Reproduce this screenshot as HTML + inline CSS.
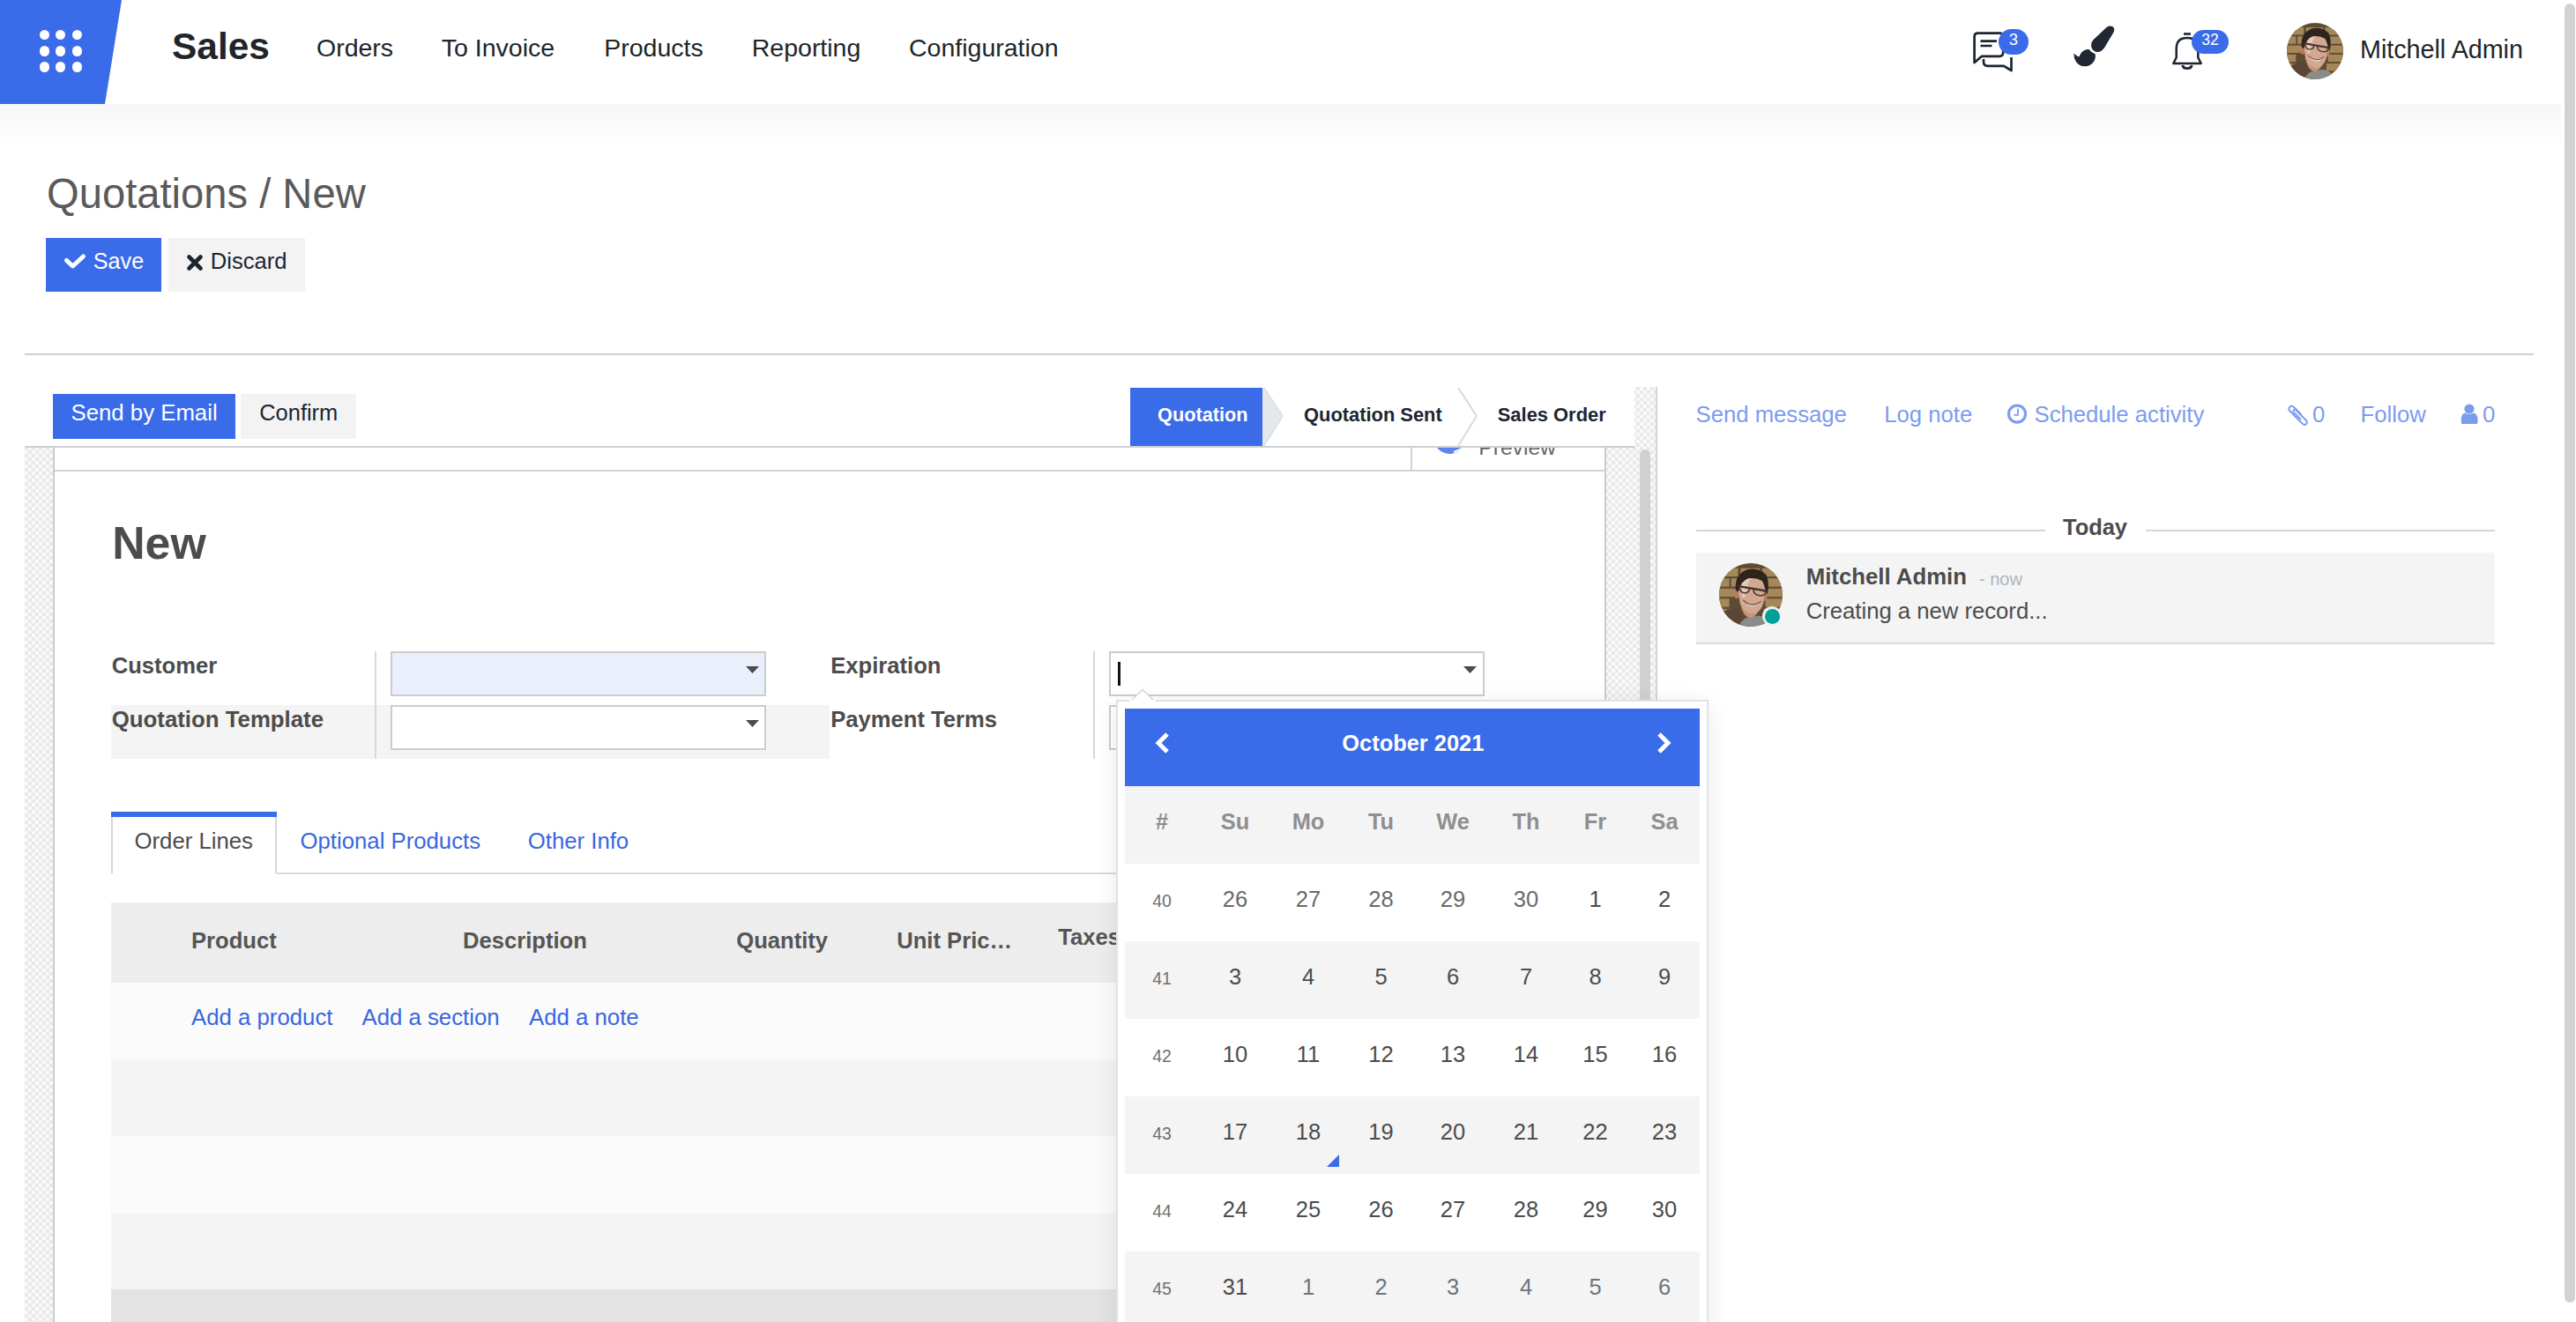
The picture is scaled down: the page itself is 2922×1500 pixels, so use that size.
<!DOCTYPE html>
<html><head><meta charset="utf-8"><title>Quotations / New</title>
<style>
html,body{margin:0;padding:0;}
body{width:2922px;height:1500px;overflow:hidden;position:relative;background:#fff;font-family:"Liberation Sans",sans-serif;}
.r{position:absolute;}
.t{position:absolute;white-space:nowrap;line-height:1;}
svg.r{display:block;overflow:visible;}
</style></head><body>
<div class="r" style="left:0px;top:0px;width:2922px;height:118px;background:#ffffff;"></div>
<div class="r" style="left:0px;top:118px;width:2905px;height:50px;background:linear-gradient(to bottom, rgba(40,60,80,0.045), rgba(40,60,80,0));"></div>
<svg class="r" style="left:0;top:0" width="140" height="118"><polygon points="0,0 138,0 119,118 0,118" fill="#3a6be9"/></svg>
<div class="r" style="left:45.16px;top:34.25px;width:11.2px;height:11.2px;border-radius:50%;background:#fff"></div>
<div class="r" style="left:63.30px;top:34.25px;width:11.2px;height:11.2px;border-radius:50%;background:#fff"></div>
<div class="r" style="left:81.60px;top:34.25px;width:11.2px;height:11.2px;border-radius:50%;background:#fff"></div>
<div class="r" style="left:45.16px;top:52.34px;width:11.2px;height:11.2px;border-radius:50%;background:#fff"></div>
<div class="r" style="left:63.30px;top:52.34px;width:11.2px;height:11.2px;border-radius:50%;background:#fff"></div>
<div class="r" style="left:81.60px;top:52.34px;width:11.2px;height:11.2px;border-radius:50%;background:#fff"></div>
<div class="r" style="left:45.16px;top:70.38px;width:11.2px;height:11.2px;border-radius:50%;background:#fff"></div>
<div class="r" style="left:63.30px;top:70.38px;width:11.2px;height:11.2px;border-radius:50%;background:#fff"></div>
<div class="r" style="left:81.60px;top:70.38px;width:11.2px;height:11.2px;border-radius:50%;background:#fff"></div>
<div class="t " style="left:195.00px;top:32.07px;font-size:42.45px;font-weight:700;color:#212529;">Sales</div>
<div class="t " style="left:359.00px;top:40.37px;font-size:28.5px;font-weight:400;color:#212529;">Orders</div>
<div class="t " style="left:500.75px;top:40.37px;font-size:28.5px;font-weight:400;color:#212529;">To Invoice</div>
<div class="t " style="left:685.25px;top:40.37px;font-size:28.5px;font-weight:400;color:#212529;">Products</div>
<div class="t " style="left:852.75px;top:40.37px;font-size:28.5px;font-weight:400;color:#212529;">Reporting</div>
<div class="t " style="left:1031.00px;top:40.37px;font-size:28.5px;font-weight:400;color:#212529;">Configuration</div>
<svg class="r" style="left:2230px;top:28.8px" width="60" height="56" viewBox="0 0 60 56">
<path d="M9.6 42 V12.5 Q9.6 8.6 13.5 8.6 H38 Q42.2 8.6 42.2 12.8 V30.5 Q42.2 34.8 38 34.8 H18 L9.6 42 Z" fill="none" stroke="#1d2531" stroke-width="2.7" stroke-linejoin="round"/>
<path d="M16.5 17.7 H35 M16.5 23 H29.5" stroke="#1d2531" stroke-width="2.7"/>
<path d="M20 38 V41 Q20 45.8 24.5 45.8 H43 L51.5 51 V36" fill="none" stroke="#1d2531" stroke-width="2.7" stroke-linejoin="round"/>
</svg>
<div class="r" style="left:2267px;top:33px;width:34px;height:29px;border-radius:15px;background:#3a6be9"></div>
<div class="t" style="left:2084.00px;width:400px;text-align:center;top:36.34px;font-size:18.5px;font-weight:400;color:#fff;">3</div>
<svg class="r" style="left:2340px;top:20px" width="70" height="65" viewBox="0 0 70 65">
<path d="M49.8 10.8 Q53.5 8.3 56.8 10.6 Q59.3 13.2 57.4 16.8 L47.2 34 Q43.2 39.6 38.2 38.9 Q32.2 37.8 32 31.2 Q32 27.6 34.6 25 Z" fill="#212833"/>
<path d="M12.3 40.5 Q16 44.2 18.6 44.2 Q20.2 39.2 24 37.2 Q27 35.8 29.8 36.1 Q31.6 39.4 36.7 41.2 Q37.6 47.2 34 51.2 Q30 55.6 24.5 55.3 Q18.5 55 15 50.2 Q12.2 46 12.3 40.5 Z" fill="#212833"/>
</svg>
<svg class="r" style="left:2460px;top:32px" width="44" height="52" viewBox="0 0 44 52">
<path d="M17 6.5 H25" stroke="#1d2531" stroke-width="2.6"/>
<path d="M5.3 40 L8.7 33.2 V23 Q8.7 11 21 11 Q33.3 11 33.3 23 V33.2 L36.7 40 Z" fill="none" stroke="#1d2531" stroke-width="2.5" stroke-linejoin="round"/>
<path d="M15.8 42 Q16.2 45.6 21 45.6 Q25.8 45.6 26.2 42" fill="none" stroke="#1d2531" stroke-width="2.8"/>
</svg>
<div class="r" style="left:2486px;top:34px;width:42px;height:27px;border-radius:14px;background:#3a6be9"></div>
<div class="t" style="left:2307.00px;width:400px;text-align:center;top:37.10px;font-size:17.6px;font-weight:400;color:#fff;">32</div>
<svg class="r" style="left:2594px;top:26px" width="64" height="64" viewBox="0 0 100 100">
<defs><clipPath id="c2594"><circle cx="50" cy="50" r="50"/></clipPath></defs>
<g clip-path="url(#c2594)">
<rect width="100" height="100" fill="#5f4b34"/>
<g fill="#a4885a">
<rect x="0" y="8" width="30" height="13"/><rect x="34" y="8" width="30" height="13"/><rect x="68" y="8" width="32" height="13"/>
<rect x="-14" y="24" width="30" height="13"/><rect x="19" y="24" width="30" height="13"/><rect x="73" y="24" width="30" height="13"/>
<rect x="0" y="40" width="30" height="13"/><rect x="70" y="40" width="30" height="13"/>
<rect x="-14" y="56" width="30" height="13"/><rect x="73" y="56" width="30" height="13"/>
<rect x="0" y="72" width="30" height="13"/><rect x="70" y="72" width="30" height="13"/>
</g>
<path d="M0 100 V80 Q15 70 30 70 L48 100 Z" fill="#5b4535"/>
<path d="M30 100 Q40 82 55 84 Q70 80 82 92 L90 100 Z" fill="#8a8c8a"/>
<path d="M34 62 Q36 84 50 86 Q60 84 64 70 L66 58 Z" fill="#c89478"/>
<ellipse cx="28" cy="48" rx="4.5" ry="8" fill="#b57c62"/>
<ellipse cx="72" cy="52" rx="4" ry="8" fill="#b57c62"/>
<path d="M30 40 Q30 20 50 17 Q70 18 72 40 L70 62 Q66 78 52 80 Q38 78 33 64 Z" fill="#d3a890"/>
<path d="M36 30 Q42 22 52 22 Q44 30 42 50 Q38 60 36 50 Z" fill="#ead2c6" opacity=".8"/>
<path d="M26 42 Q24 18 44 10 Q62 6 74 18 Q80 30 76 50 Q72 36 68 28 Q58 22 46 24 Q34 28 30 46 Z" fill="#2e241d"/>
<path d="M28 36 L76 44" stroke="#3a2e28" stroke-width="3"/>
<path d="M32 36 Q44 38 48 40 Q48 47 40 47 Q32 46 32 36 Z M54 41 Q66 42 74 45 Q72 52 64 51 Q54 50 54 41 Z" fill="none" stroke="#4a3a34" stroke-width="2.2"/>
<path d="M40 60 Q52 70 64 62 Q58 68 52 68 Q44 67 40 60 Z" fill="#f2eee8"/>
<path d="M38 58 Q52 72 66 60" fill="none" stroke="#5a3a30" stroke-width="1.5"/>
</g></svg>
<div class="t " style="left:2677.00px;top:41.61px;font-size:28.7px;font-weight:400;color:#212529;">Mitchell Admin</div>
<div class="r" style="left:2909px;top:4px;width:12px;height:1474px;background:#d2d2d2;border-radius:6px"></div>
<div class="t " style="left:53.00px;top:195.57px;font-size:47.17px;font-weight:400;color:#5a5a5a;">Quotations / New</div>
<div class="r" style="left:52px;top:270px;width:131px;height:61px;background:#3a6be9;"></div>
<div class="r" style="left:191px;top:270px;width:155px;height:61px;background:#f3f3f3;"></div>
<svg class="r" style="left:72px;top:284px" width="28" height="26" viewBox="0 0 28 26"><path d="M3.5 11.5 L10.5 18 L22.5 7" fill="none" stroke="#fff" stroke-width="5" stroke-linejoin="round" stroke-linecap="round"/></svg>
<div class="t " style="left:105.80px;top:284.27px;font-size:25.2px;font-weight:400;color:#fff;">Save</div>
<svg class="r" style="left:210px;top:287px" width="22" height="22" viewBox="0 0 22 22"><path d="M4.5 4.5 L17.5 17.5 M17.5 4.5 L4.5 17.5" stroke="#1d2531" stroke-width="4.6" stroke-linecap="round"/></svg>
<div class="t " style="left:238.80px;top:283.93px;font-size:25.6px;font-weight:400;color:#1d2531;">Discard</div>
<div class="r" style="left:28px;top:401px;width:2846px;height:2px;background:#d0d0d0;"></div>
<div class="r" style="left:28px;top:439px;width:1850px;height:1061px;background:conic-gradient(#e9e9e9 25%, #f9f9f9 0 50%, #e9e9e9 0 75%, #f9f9f9 0) 0 0/8px 8px;"></div>
<div class="r" style="left:1878px;top:439px;width:2px;height:1061px;background:#cfd3da;"></div>
<div class="r" style="left:28px;top:439px;width:1826px;height:67px;background:#ffffff;"></div>
<div class="r" style="left:28px;top:506px;width:1826px;height:2px;background:#cbd0d8;"></div>
<div class="r" style="left:60px;top:447px;width:207px;height:51px;background:#3a6be9;"></div>
<div class="t " style="left:80.50px;top:456.18px;font-size:25.78px;font-weight:400;color:#fff;">Send by Email</div>
<div class="r" style="left:273px;top:447px;width:131px;height:51px;background:#f3f3f3;"></div>
<div class="t " style="left:294.25px;top:456.47px;font-size:25.43px;font-weight:400;color:#1d2531;">Confirm</div>
<div class="r" style="left:1282px;top:440px;width:152px;height:66px;background:#3a6be9;"></div>
<svg class="r" style="left:1432px;top:440px" width="25" height="66"><polygon points="0,0 2,0 23,32 2,66 0,66" fill="#e4e7eb"/><polyline points="2,0 23,32 2,66" fill="none" stroke="#d6dae0" stroke-width="1.2"/></svg>
<svg class="r" style="left:1650px;top:440px" width="27" height="66"><polyline points="4,0 25,32 4,66" fill="none" stroke="#d6dae0" stroke-width="2"/></svg>
<div class="t " style="left:1313.00px;top:459.86px;font-size:21.72px;font-weight:700;color:#fff;">Quotation</div>
<div class="t " style="left:1479.00px;top:459.73px;font-size:21.88px;font-weight:700;color:#1d2531;">Quotation Sent</div>
<div class="t " style="left:1698.75px;top:459.70px;font-size:21.91px;font-weight:700;color:#1d2531;">Sales Order</div>
<div class="r" style="left:1860px;top:510px;width:12px;height:400px;background:#d0d0d0;border-radius:6px"></div>
<div class="r" style="left:60px;top:508px;width:1762px;height:992px;background:#c9cbd3;"></div>
<div class="r" style="left:62px;top:508px;width:1758px;height:992px;background:#ffffff;"></div>
<div class="r" style="left:1600px;top:508px;width:2px;height:26px;background:#cfd3da;"></div>
<div class="r" style="left:62px;top:533px;width:1758px;height:2px;background:#cfd3da;"></div>
<div class="r" style="left:1620px;top:508px;width:160px;height:25px;overflow:hidden"><div class="r" style="left:5.6px;top:-30.8px;width:37.8px;height:37.8px;border-radius:50%;background:#5b84f0"></div><svg class="r" style="left:28px;top:0px" width="14" height="6"><path d="M1 5 Q7 3 12 0" fill="none" stroke="#fff" stroke-width="2.2"/></svg><div class="t" style="left:57.3px;top:-12.25px;font-size:24.63px;color:#666">Preview</div></div>
<div class="t " style="left:127.20px;top:590.65px;font-size:51.8px;font-weight:700;color:#4c4c4c;">New</div>
<div class="r" style="left:126px;top:800px;width:815px;height:61px;background:#f4f4f4;"></div>
<div class="r" style="left:425px;top:739px;width:2px;height:122px;background:#d8d8d8;"></div>
<div class="t " style="left:126.75px;top:742.58px;font-size:25.6px;font-weight:700;color:#4c4c4c;">Customer</div>
<div class="t " style="left:126.75px;top:803.91px;font-size:25.8px;font-weight:700;color:#4c4c4c;">Quotation Template</div>
<div class="r" style="left:443px;top:739px;width:426px;height:51px;background:#cccccc;"></div>
<div class="r" style="left:445px;top:741px;width:422px;height:47px;background:#e9f0fc;"></div>
<div class="r" style="left:443px;top:800px;width:426px;height:51px;background:#cccccc;"></div>
<div class="r" style="left:445px;top:802px;width:422px;height:47px;background:#ffffff;"></div>
<svg class="r" style="left:846px;top:756px" width="15" height="8"><polygon points="0,0 15,0 7.5,8" fill="#4c4c4c"/></svg>
<svg class="r" style="left:846px;top:817px" width="15" height="8"><polygon points="0,0 15,0 7.5,8" fill="#4c4c4c"/></svg>
<div class="t " style="left:942.25px;top:742.58px;font-size:25.6px;font-weight:700;color:#4c4c4c;">Expiration</div>
<div class="t " style="left:942.25px;top:804.08px;font-size:25.6px;font-weight:700;color:#4c4c4c;">Payment Terms</div>
<div class="r" style="left:1240px;top:739px;width:2px;height:122px;background:#d8d8d8;"></div>
<div class="r" style="left:1258px;top:739px;width:426px;height:51px;background:#cccccc;"></div>
<div class="r" style="left:1260px;top:741px;width:422px;height:47px;background:#ffffff;"></div>
<div class="r" style="left:1258px;top:800px;width:426px;height:51px;background:#cccccc;"></div>
<div class="r" style="left:1260px;top:802px;width:422px;height:47px;background:#ffffff;"></div>
<div class="r" style="left:1268px;top:751px;width:3px;height:27px;background:#111;"></div>
<svg class="r" style="left:1660px;top:756px" width="15" height="8"><polygon points="0,0 15,0 7.5,8" fill="#4c4c4c"/></svg>
<div class="r" style="left:126px;top:990px;width:1694px;height:2px;background:#d5d8dc;"></div>
<div class="r" style="left:126px;top:921px;width:188px;height:71px;background:#ffffff;"></div>
<div class="r" style="left:126px;top:921px;width:188px;height:6px;background:#3a6be9;"></div>
<div class="r" style="left:126px;top:927px;width:2px;height:64px;background:#d5d8dc;"></div>
<div class="r" style="left:312px;top:927px;width:2px;height:64px;background:#d5d8dc;"></div>
<div class="r" style="left:128px;top:990px;width:184px;height:2px;background:#ffffff;"></div>
<div class="t " style="left:152.50px;top:941.96px;font-size:25.74px;font-weight:400;color:#4c4c4c;">Order Lines</div>
<div class="t " style="left:340.50px;top:941.96px;font-size:25.74px;font-weight:400;color:#3a66e0;">Optional Products</div>
<div class="t " style="left:598.75px;top:941.96px;font-size:25.74px;font-weight:400;color:#3a66e0;">Other Info</div>
<div class="r" style="left:126px;top:1024px;width:1694px;height:91px;background:#ededed;"></div>
<div class="t " style="left:217.00px;top:1055.33px;font-size:25.6px;font-weight:700;color:#555;">Product</div>
<div class="t " style="left:525.00px;top:1055.33px;font-size:25.6px;font-weight:700;color:#555;">Description</div>
<div class="t " style="left:835.25px;top:1055.33px;font-size:25.6px;font-weight:700;color:#555;">Quantity</div>
<div class="t " style="left:1017.25px;top:1055.33px;font-size:25.6px;font-weight:700;color:#555;">Unit Pric…</div>
<div class="t " style="left:1200.25px;top:1051.33px;font-size:25.6px;font-weight:700;color:#555;">Taxes</div>
<div class="r" style="left:126px;top:1115px;width:1694px;height:87px;background:#fbfbfb;"></div>
<div class="r" style="left:126px;top:1202px;width:1694px;height:87px;background:#f4f4f4;"></div>
<div class="r" style="left:126px;top:1289px;width:1694px;height:87px;background:#fbfbfb;"></div>
<div class="r" style="left:126px;top:1376px;width:1694px;height:87px;background:#f4f4f4;"></div>
<div class="r" style="left:126px;top:1463px;width:1694px;height:40px;background:#e3e3e3;"></div>
<div class="t " style="left:217.00px;top:1142.43px;font-size:25.78px;font-weight:400;color:#3a66e0;">Add a product</div>
<div class="t " style="left:410.50px;top:1142.43px;font-size:25.78px;font-weight:400;color:#3a66e0;">Add a section</div>
<div class="t " style="left:600.00px;top:1142.43px;font-size:25.78px;font-weight:400;color:#3a66e0;">Add a note</div>
<div class="r" style="left:1880px;top:439px;width:1029px;height:1061px;background:#ffffff;"></div>
<div class="t " style="left:1923.50px;top:458.49px;font-size:25.7px;font-weight:400;color:#7c9cee;">Send message</div>
<div class="t " style="left:2137.20px;top:458.49px;font-size:25.7px;font-weight:400;color:#7c9cee;">Log note</div>
<svg class="r" style="left:2276.3px;top:458px" width="24" height="24" viewBox="0 0 24 24"><circle cx="12" cy="11.7" r="9.5" fill="none" stroke="#7c9cee" stroke-width="3.2"/><path d="M13 5.5 V12.8 H8.3" fill="none" stroke="#7c9cee" stroke-width="1.8"/></svg>
<div class="t " style="left:2307.50px;top:458.49px;font-size:25.7px;font-weight:400;color:#7c9cee;">Schedule activity</div>
<svg class="r" style="left:2595px;top:458px" width="24" height="24" viewBox="0 0 24 24"><path d="M15.5 12.5 L7 4 Q4.5 1.6 2.3 3.8 Q0.1 6 2.5 8.5 L16.5 22.5 Q19 25 21 23 Q23 21 20.5 18.5 L9.5 7.5 Q8 6 6.8 7.2 Q5.6 8.4 7 9.8 L15 17.8" fill="none" stroke="#7c9cee" stroke-width="1.9"/></svg>
<div class="t " style="left:2623.00px;top:458.49px;font-size:25.7px;font-weight:400;color:#7c9cee;">0</div>
<div class="t " style="left:2677.50px;top:458.49px;font-size:25.7px;font-weight:400;color:#7c9cee;">Follow</div>
<svg class="r" style="left:2791px;top:458px" width="22" height="24" viewBox="0 0 22 24"><circle cx="10" cy="6" r="5.6" fill="#7c9cee"/><path d="M0.8 21.5 V17.5 Q0.8 11.8 5 10.5 Q10 13.5 15 10.5 Q19.5 11.8 19.5 17.5 V21.5 Q19.5 23 18 23 H2.3 Q0.8 23 0.8 21.5 Z" fill="#7c9cee"/></svg>
<div class="t " style="left:2816.00px;top:458.49px;font-size:25.7px;font-weight:400;color:#7c9cee;">0</div>
<div class="r" style="left:1924px;top:601px;width:396px;height:2px;background:#d3d7dd;"></div>
<div class="r" style="left:2434px;top:601px;width:396px;height:2px;background:#d3d7dd;"></div>
<div class="t " style="left:2340.00px;top:585.97px;font-size:25.44px;font-weight:700;color:#4c4c4c;">Today</div>
<div class="r" style="left:1924px;top:627px;width:906px;height:102px;background:#f4f4f4;"></div>
<div class="r" style="left:1924px;top:729px;width:906px;height:2px;background:#d8dadd;"></div>
<svg class="r" style="left:1950px;top:639px" width="72" height="72" viewBox="0 0 100 100">
<defs><clipPath id="c1950"><circle cx="50" cy="50" r="50"/></clipPath></defs>
<g clip-path="url(#c1950)">
<rect width="100" height="100" fill="#5f4b34"/>
<g fill="#a4885a">
<rect x="0" y="8" width="30" height="13"/><rect x="34" y="8" width="30" height="13"/><rect x="68" y="8" width="32" height="13"/>
<rect x="-14" y="24" width="30" height="13"/><rect x="19" y="24" width="30" height="13"/><rect x="73" y="24" width="30" height="13"/>
<rect x="0" y="40" width="30" height="13"/><rect x="70" y="40" width="30" height="13"/>
<rect x="-14" y="56" width="30" height="13"/><rect x="73" y="56" width="30" height="13"/>
<rect x="0" y="72" width="30" height="13"/><rect x="70" y="72" width="30" height="13"/>
</g>
<path d="M0 100 V80 Q15 70 30 70 L48 100 Z" fill="#5b4535"/>
<path d="M30 100 Q40 82 55 84 Q70 80 82 92 L90 100 Z" fill="#8a8c8a"/>
<path d="M34 62 Q36 84 50 86 Q60 84 64 70 L66 58 Z" fill="#c89478"/>
<ellipse cx="28" cy="48" rx="4.5" ry="8" fill="#b57c62"/>
<ellipse cx="72" cy="52" rx="4" ry="8" fill="#b57c62"/>
<path d="M30 40 Q30 20 50 17 Q70 18 72 40 L70 62 Q66 78 52 80 Q38 78 33 64 Z" fill="#d3a890"/>
<path d="M36 30 Q42 22 52 22 Q44 30 42 50 Q38 60 36 50 Z" fill="#ead2c6" opacity=".8"/>
<path d="M26 42 Q24 18 44 10 Q62 6 74 18 Q80 30 76 50 Q72 36 68 28 Q58 22 46 24 Q34 28 30 46 Z" fill="#2e241d"/>
<path d="M28 36 L76 44" stroke="#3a2e28" stroke-width="3"/>
<path d="M32 36 Q44 38 48 40 Q48 47 40 47 Q32 46 32 36 Z M54 41 Q66 42 74 45 Q72 52 64 51 Q54 50 54 41 Z" fill="none" stroke="#4a3a34" stroke-width="2.2"/>
<path d="M40 60 Q52 70 64 62 Q58 68 52 68 Q44 67 40 60 Z" fill="#f2eee8"/>
<path d="M38 58 Q52 72 66 60" fill="none" stroke="#5a3a30" stroke-width="1.5"/>
</g></svg>
<div class="r" style="left:1999px;top:688px;width:22px;height:22px;border-radius:50%;background:#eef0f2"></div>
<div class="r" style="left:2001.5px;top:690.5px;width:17px;height:17px;border-radius:50%;background:#00a09a"></div>
<div class="t " style="left:2048.75px;top:641.94px;font-size:25.76px;font-weight:700;color:#4c4c4c;">Mitchell Admin</div>
<div class="t " style="left:2245.00px;top:646.82px;font-size:20px;font-weight:400;color:#adb5bd;">- now</div>
<div class="t " style="left:2048.75px;top:681.28px;font-size:25.66px;font-weight:400;color:#4c4c4c;">Creating a new record...</div>
<div class="r" style="left:1266px;top:794px;width:672px;height:720px;background:#fff;border:2px solid #dfe2e6;box-sizing:border-box;box-shadow:0 6px 26px rgba(0,0,0,0.09)"></div>
<svg class="r" style="left:1281px;top:781px" width="30" height="16"><polygon points="1,15 15,1.5 29,15" fill="#fff" stroke="#d3d7dc" stroke-width="1.6"/><rect x="0" y="13" width="30" height="4" fill="#fff"/></svg>
<div class="r" style="left:1276px;top:804px;width:652px;height:88px;background:#3a6be9;"></div>
<svg class="r" style="left:1306px;top:828px" width="26" height="30" viewBox="0 0 26 30"><path d="M18 5 L8 15 L18 25" fill="none" stroke="#fff" stroke-width="5"/></svg>
<svg class="r" style="left:1874px;top:828px" width="26" height="30" viewBox="0 0 26 30"><path d="M8 5 L18 15 L8 25" fill="none" stroke="#fff" stroke-width="5"/></svg>
<div class="t" style="left:1402.85px;width:400px;text-align:center;top:831.49px;font-size:25.41px;font-weight:700;color:#fff;">October 2021</div>
<div class="r" style="left:1276px;top:892px;width:652px;height:88px;background:#f4f4f4;"></div>
<div class="t" style="left:1118.00px;width:400px;text-align:center;top:919.50px;font-size:25.4px;font-weight:700;color:#8f8f8f;">#</div>
<div class="t" style="left:1201.00px;width:400px;text-align:center;top:919.50px;font-size:25.4px;font-weight:700;color:#8f8f8f;">Su</div>
<div class="t" style="left:1284.00px;width:400px;text-align:center;top:919.50px;font-size:25.4px;font-weight:700;color:#8f8f8f;">Mo</div>
<div class="t" style="left:1366.50px;width:400px;text-align:center;top:919.50px;font-size:25.4px;font-weight:700;color:#8f8f8f;">Tu</div>
<div class="t" style="left:1448.00px;width:400px;text-align:center;top:919.50px;font-size:25.4px;font-weight:700;color:#8f8f8f;">We</div>
<div class="t" style="left:1531.00px;width:400px;text-align:center;top:919.50px;font-size:25.4px;font-weight:700;color:#8f8f8f;">Th</div>
<div class="t" style="left:1609.50px;width:400px;text-align:center;top:919.50px;font-size:25.4px;font-weight:700;color:#8f8f8f;">Fr</div>
<div class="t" style="left:1688.00px;width:400px;text-align:center;top:919.50px;font-size:25.4px;font-weight:700;color:#8f8f8f;">Sa</div>
<div class="t" style="left:1118.00px;width:400px;text-align:center;top:1012.79px;font-size:19.5px;font-weight:400;color:#6f6f6f;">40</div>
<div class="t" style="left:1201.00px;width:400px;text-align:center;top:1007.71px;font-size:25.5px;font-weight:400;color:#6a6a6a;">26</div>
<div class="t" style="left:1284.00px;width:400px;text-align:center;top:1007.71px;font-size:25.5px;font-weight:400;color:#6a6a6a;">27</div>
<div class="t" style="left:1366.50px;width:400px;text-align:center;top:1007.71px;font-size:25.5px;font-weight:400;color:#6a6a6a;">28</div>
<div class="t" style="left:1448.00px;width:400px;text-align:center;top:1007.71px;font-size:25.5px;font-weight:400;color:#6a6a6a;">29</div>
<div class="t" style="left:1531.00px;width:400px;text-align:center;top:1007.71px;font-size:25.5px;font-weight:400;color:#6a6a6a;">30</div>
<div class="t" style="left:1609.50px;width:400px;text-align:center;top:1007.71px;font-size:25.5px;font-weight:400;color:#4c4c4c;">1</div>
<div class="t" style="left:1688.00px;width:400px;text-align:center;top:1007.71px;font-size:25.5px;font-weight:400;color:#4c4c4c;">2</div>
<div class="r" style="left:1276px;top:1068px;width:652px;height:88px;background:#f4f4f4;"></div>
<div class="t" style="left:1118.00px;width:400px;text-align:center;top:1100.79px;font-size:19.5px;font-weight:400;color:#6f6f6f;">41</div>
<div class="t" style="left:1201.00px;width:400px;text-align:center;top:1095.71px;font-size:25.5px;font-weight:400;color:#4c4c4c;">3</div>
<div class="t" style="left:1284.00px;width:400px;text-align:center;top:1095.71px;font-size:25.5px;font-weight:400;color:#4c4c4c;">4</div>
<div class="t" style="left:1366.50px;width:400px;text-align:center;top:1095.71px;font-size:25.5px;font-weight:400;color:#4c4c4c;">5</div>
<div class="t" style="left:1448.00px;width:400px;text-align:center;top:1095.71px;font-size:25.5px;font-weight:400;color:#4c4c4c;">6</div>
<div class="t" style="left:1531.00px;width:400px;text-align:center;top:1095.71px;font-size:25.5px;font-weight:400;color:#4c4c4c;">7</div>
<div class="t" style="left:1609.50px;width:400px;text-align:center;top:1095.71px;font-size:25.5px;font-weight:400;color:#4c4c4c;">8</div>
<div class="t" style="left:1688.00px;width:400px;text-align:center;top:1095.71px;font-size:25.5px;font-weight:400;color:#4c4c4c;">9</div>
<div class="t" style="left:1118.00px;width:400px;text-align:center;top:1188.79px;font-size:19.5px;font-weight:400;color:#6f6f6f;">42</div>
<div class="t" style="left:1201.00px;width:400px;text-align:center;top:1183.71px;font-size:25.5px;font-weight:400;color:#4c4c4c;">10</div>
<div class="t" style="left:1284.00px;width:400px;text-align:center;top:1183.71px;font-size:25.5px;font-weight:400;color:#4c4c4c;">11</div>
<div class="t" style="left:1366.50px;width:400px;text-align:center;top:1183.71px;font-size:25.5px;font-weight:400;color:#4c4c4c;">12</div>
<div class="t" style="left:1448.00px;width:400px;text-align:center;top:1183.71px;font-size:25.5px;font-weight:400;color:#4c4c4c;">13</div>
<div class="t" style="left:1531.00px;width:400px;text-align:center;top:1183.71px;font-size:25.5px;font-weight:400;color:#4c4c4c;">14</div>
<div class="t" style="left:1609.50px;width:400px;text-align:center;top:1183.71px;font-size:25.5px;font-weight:400;color:#4c4c4c;">15</div>
<div class="t" style="left:1688.00px;width:400px;text-align:center;top:1183.71px;font-size:25.5px;font-weight:400;color:#4c4c4c;">16</div>
<div class="r" style="left:1276px;top:1244px;width:652px;height:88px;background:#f4f4f4;"></div>
<div class="t" style="left:1118.00px;width:400px;text-align:center;top:1276.79px;font-size:19.5px;font-weight:400;color:#6f6f6f;">43</div>
<div class="t" style="left:1201.00px;width:400px;text-align:center;top:1271.71px;font-size:25.5px;font-weight:400;color:#4c4c4c;">17</div>
<div class="t" style="left:1284.00px;width:400px;text-align:center;top:1271.71px;font-size:25.5px;font-weight:400;color:#4c4c4c;">18</div>
<div class="t" style="left:1366.50px;width:400px;text-align:center;top:1271.71px;font-size:25.5px;font-weight:400;color:#4c4c4c;">19</div>
<div class="t" style="left:1448.00px;width:400px;text-align:center;top:1271.71px;font-size:25.5px;font-weight:400;color:#4c4c4c;">20</div>
<div class="t" style="left:1531.00px;width:400px;text-align:center;top:1271.71px;font-size:25.5px;font-weight:400;color:#4c4c4c;">21</div>
<div class="t" style="left:1609.50px;width:400px;text-align:center;top:1271.71px;font-size:25.5px;font-weight:400;color:#4c4c4c;">22</div>
<div class="t" style="left:1688.00px;width:400px;text-align:center;top:1271.71px;font-size:25.5px;font-weight:400;color:#4c4c4c;">23</div>
<div class="t" style="left:1118.00px;width:400px;text-align:center;top:1364.79px;font-size:19.5px;font-weight:400;color:#6f6f6f;">44</div>
<div class="t" style="left:1201.00px;width:400px;text-align:center;top:1359.71px;font-size:25.5px;font-weight:400;color:#4c4c4c;">24</div>
<div class="t" style="left:1284.00px;width:400px;text-align:center;top:1359.71px;font-size:25.5px;font-weight:400;color:#4c4c4c;">25</div>
<div class="t" style="left:1366.50px;width:400px;text-align:center;top:1359.71px;font-size:25.5px;font-weight:400;color:#4c4c4c;">26</div>
<div class="t" style="left:1448.00px;width:400px;text-align:center;top:1359.71px;font-size:25.5px;font-weight:400;color:#4c4c4c;">27</div>
<div class="t" style="left:1531.00px;width:400px;text-align:center;top:1359.71px;font-size:25.5px;font-weight:400;color:#4c4c4c;">28</div>
<div class="t" style="left:1609.50px;width:400px;text-align:center;top:1359.71px;font-size:25.5px;font-weight:400;color:#4c4c4c;">29</div>
<div class="t" style="left:1688.00px;width:400px;text-align:center;top:1359.71px;font-size:25.5px;font-weight:400;color:#4c4c4c;">30</div>
<div class="r" style="left:1276px;top:1420px;width:652px;height:88px;background:#f4f4f4;"></div>
<div class="t" style="left:1118.00px;width:400px;text-align:center;top:1452.79px;font-size:19.5px;font-weight:400;color:#6f6f6f;">45</div>
<div class="t" style="left:1201.00px;width:400px;text-align:center;top:1447.71px;font-size:25.5px;font-weight:400;color:#4c4c4c;">31</div>
<div class="t" style="left:1284.00px;width:400px;text-align:center;top:1447.71px;font-size:25.5px;font-weight:400;color:#6c757d;">1</div>
<div class="t" style="left:1366.50px;width:400px;text-align:center;top:1447.71px;font-size:25.5px;font-weight:400;color:#6c757d;">2</div>
<div class="t" style="left:1448.00px;width:400px;text-align:center;top:1447.71px;font-size:25.5px;font-weight:400;color:#6c757d;">3</div>
<div class="t" style="left:1531.00px;width:400px;text-align:center;top:1447.71px;font-size:25.5px;font-weight:400;color:#6c757d;">4</div>
<div class="t" style="left:1609.50px;width:400px;text-align:center;top:1447.71px;font-size:25.5px;font-weight:400;color:#6c757d;">5</div>
<div class="t" style="left:1688.00px;width:400px;text-align:center;top:1447.71px;font-size:25.5px;font-weight:400;color:#6c757d;">6</div>
<svg class="r" style="left:1505px;top:1310px" width="14" height="14"><polygon points="14,0 14,14 0,14" fill="#3a6be9"/></svg>
</body></html>
